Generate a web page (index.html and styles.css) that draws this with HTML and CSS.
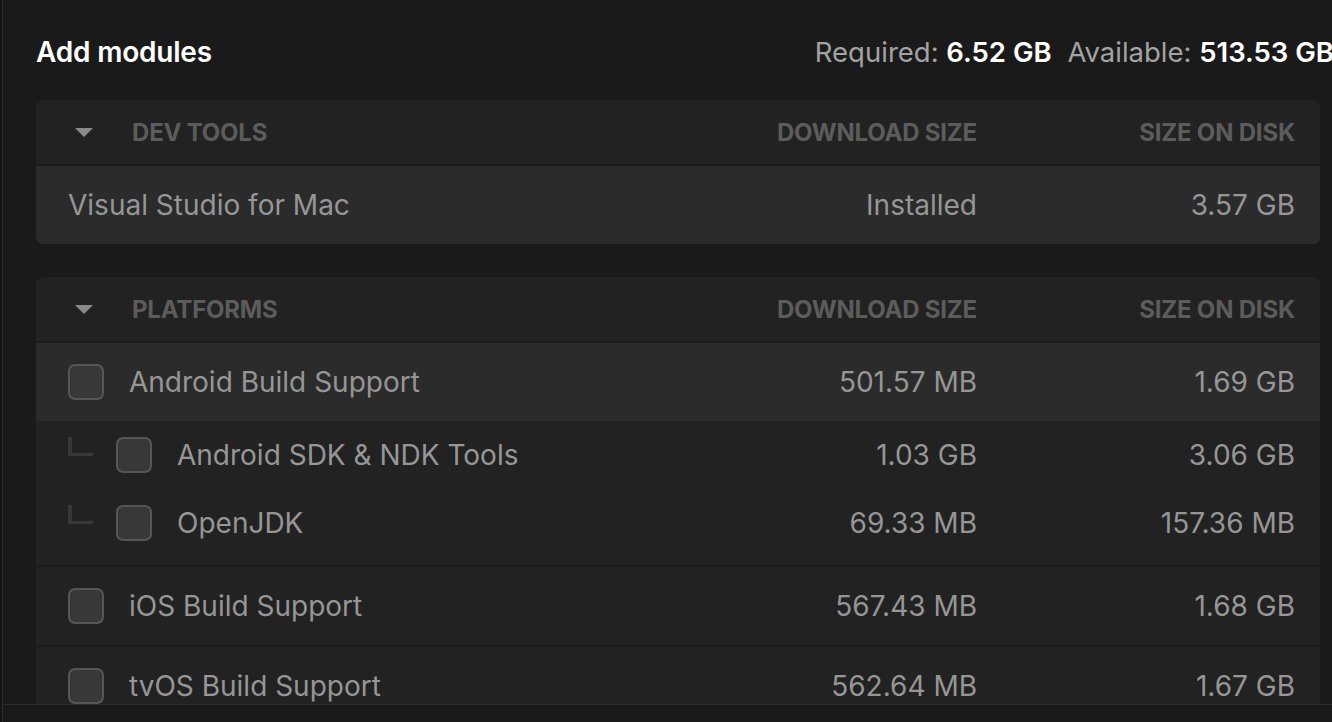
FILE: index.html
```html
<!DOCTYPE html>
<html lang="en">
<head>
<meta charset="utf-8">
<title>Add modules</title>
<link rel="stylesheet" href="styles.css">
</head>
<body>
<div class="rail"></div>
<div class="main">
  <div class="scroll">
    <header class="top">
      <h1 class="title">Add modules</h1>
      <div class="stats">
        <span class="lbl">Required:</span> <b>6.52 GB</b>
        <span class="lbl gap">Available:</span> <b>513.53 GB</b>
      </div>
    </header>

    <section class="card">
      <div class="grid head">
        <div class="hname"><span class="tri"></span><span>DEV TOOLS</span></div>
        <div class="num">DOWNLOAD SIZE</div>
        <div class="num">SIZE ON DISK</div>
      </div>
      <div class="grid row hl">
        <div class="name">Visual Studio for Mac</div>
        <div class="num">Installed</div>
        <div class="num">3.57 GB</div>
      </div>
    </section>

    <section class="card">
      <div class="grid head">
        <div class="hname"><span class="tri"></span><span>PLATFORMS</span></div>
        <div class="num">DOWNLOAD SIZE</div>
        <div class="num">SIZE ON DISK</div>
      </div>
      <div class="group with-subs">
        <div class="grid row hl">
          <div class="name"><span class="cb"></span>Android Build Support</div>
          <div class="num">501.57 MB</div>
          <div class="num">1.69 GB</div>
        </div>
        <div class="grid row sub">
          <div class="name"><span class="tree"></span><span class="cb"></span>Android SDK &amp; NDK Tools</div>
          <div class="num">1.03 GB</div>
          <div class="num">3.06 GB</div>
        </div>
        <div class="grid row sub">
          <div class="name"><span class="tree"></span><span class="cb"></span>OpenJDK</div>
          <div class="num">69.33 MB</div>
          <div class="num">157.36 MB</div>
        </div>
      </div>
      <div class="group">
        <div class="grid row">
          <div class="name"><span class="cb"></span>iOS Build Support</div>
          <div class="num">567.43 MB</div>
          <div class="num">1.68 GB</div>
        </div>
      </div>
      <div class="group">
        <div class="grid row">
          <div class="name"><span class="cb"></span>tvOS Build Support</div>
          <div class="num">562.64 MB</div>
          <div class="num">1.67 GB</div>
        </div>
      </div>
    </section>
  </div>
  <div class="footer"></div>
</div>
</body>
</html>
```

FILE: styles.css
```css
* { box-sizing: border-box; }
html, body { margin: 0; padding: 0; }
body {
  width: 1332px;
  height: 722px;
  overflow: hidden;
  display: flex;
  background: #1a1a1a;
  font-family: Inter, "Liberation Sans", sans-serif;
  color: #969696;
}
.rail { width: 2px; flex: none; background: #161616; }
.main {
  flex: 1;
  display: flex;
  flex-direction: column;
  border-left: 1px solid #2a2a2a;
  min-width: 0;
}
.scroll {
  flex: 1;
  overflow: hidden;
  padding: 0 12px 0 33px;
}
.footer {
  height: 18px;
  flex: none;
  border-top: 1px solid #2e2e2e;
  background: #1a1a1a;
}
.top {
  height: 100px;
  display: flex;
  align-items: center;
  padding-top: 4px;
}
.title {
  margin: 0;
  font-size: 28px;
  font-weight: 600;
  color: #ffffff;
  letter-spacing: -0.2px;
}
.stats {
  margin-left: auto;
  margin-right: -14px;
  white-space: nowrap;
  font-size: 27.5px;
  color: #a3a3a3;
}
.stats b { color: #ffffff; font-weight: 600; }
.stats .gap { margin-left: 8px; }

.card {
  background: #222222;
  border-radius: 7px;
  overflow: hidden;
  margin-bottom: 33px;
}
.grid {
  display: grid;
  grid-template-columns: 1fr 300px 318px;
  align-items: center;
  padding: 0 25px 0 32px;
}
.num { text-align: right; white-space: nowrap; }
.head {
  height: 66px;
  border-bottom: 2px solid #1b1b1b;
  font-size: 24px;
  font-weight: 700;
  color: #5c5c5c;
  letter-spacing: -0.2px;
}
.hname { display: flex; align-items: center; }
.tri {
  width: 0;
  height: 0;
  margin-left: 7px;
  margin-right: 39px;
  border-left: 9px solid transparent;
  border-right: 9px solid transparent;
  border-top: 9px solid #8a8a8a;
}
.row {
  height: 78px;
  font-size: 28px;
}
.row.hl { background: #2b2b2b; }
.row.sub { height: 68px; }
.with-subs { padding-bottom: 8px; }
.group + .group { border-top: 2px solid #1b1b1b; }
.name { display: flex; align-items: center; white-space: nowrap; }
.cb {
  width: 36px;
  height: 36px;
  flex: none;
  border: 2px solid #565656;
  border-radius: 7px;
  background: #383838;
  margin-right: 25px;
}
.tree {
  width: 25px;
  height: 19px;
  flex: none;
  align-self: center;
  margin-top: -17px;
  margin-right: 23px;
  border-left: 4px solid #383838;
  border-bottom: 3px solid #383838;
}
```
